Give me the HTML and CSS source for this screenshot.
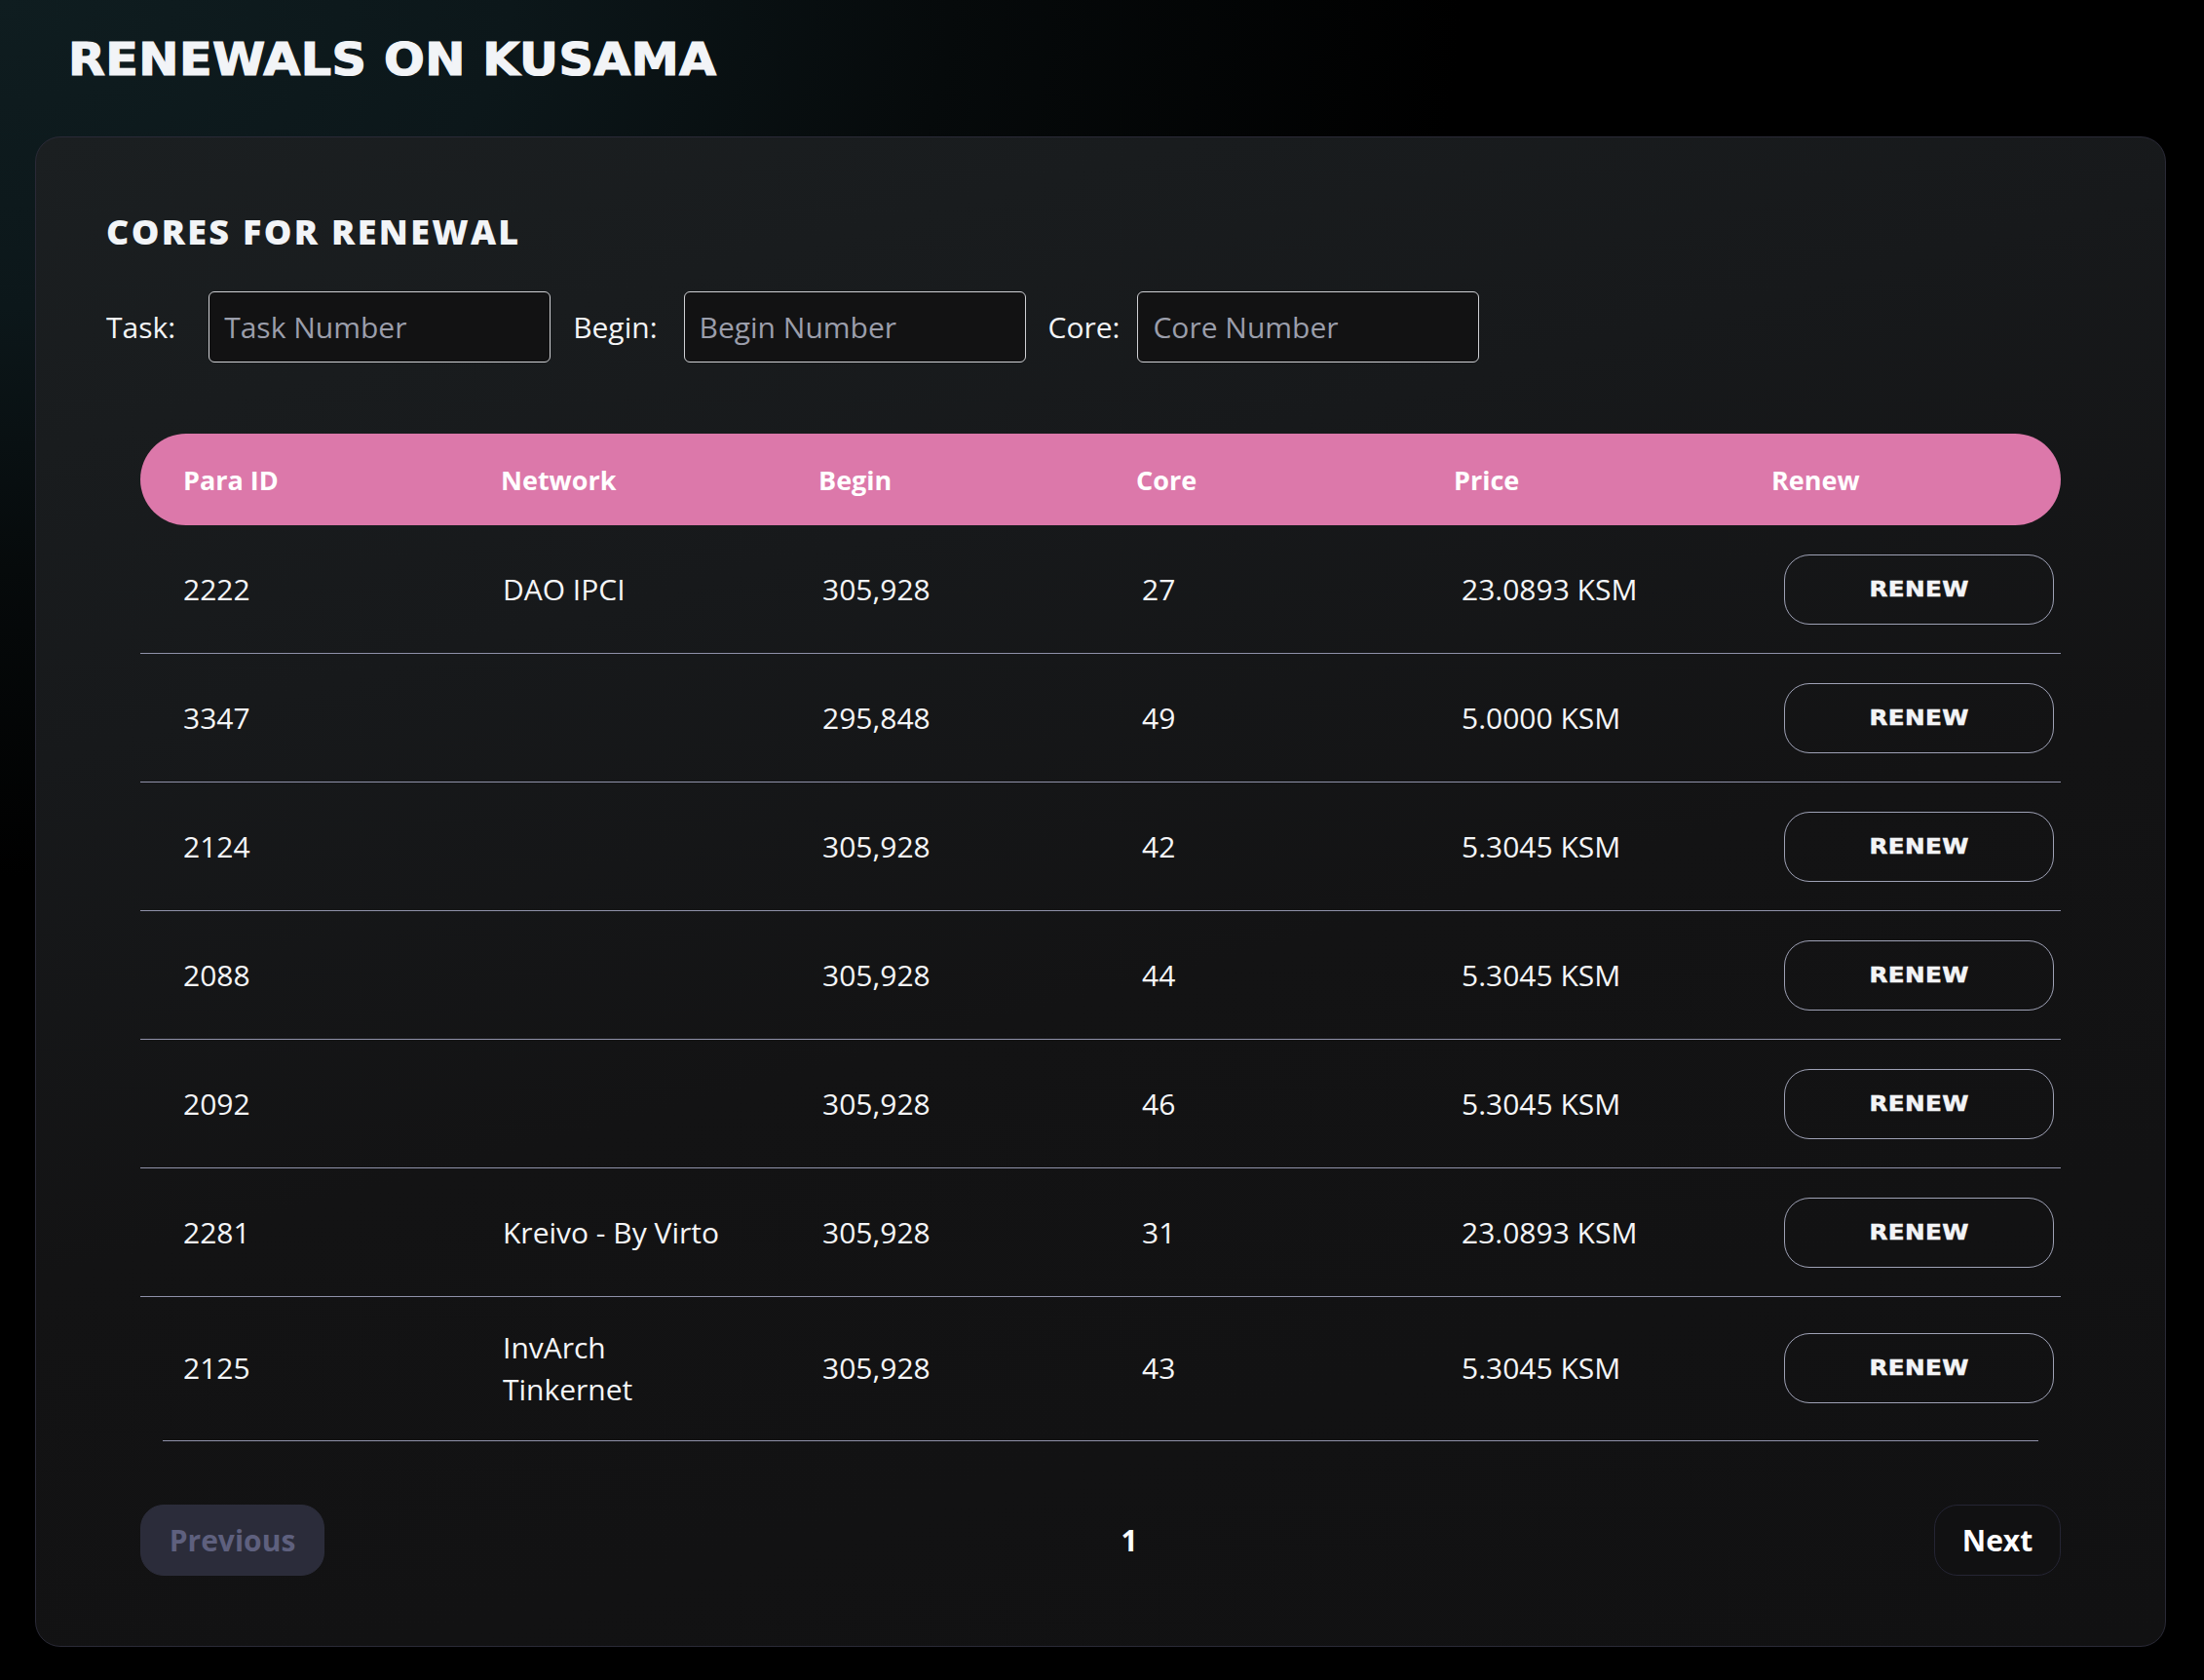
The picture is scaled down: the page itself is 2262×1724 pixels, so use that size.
FILE: index.html
```html
<!DOCTYPE html>
<html lang="en">
<head>
<meta charset="utf-8">
<title>Renewals on Kusama</title>
<link rel="stylesheet" href="styles.css">
</head>
<body>
<main class="page">
  <h1 class="page-title"><span class="wide-text">RENEWALS ON KUSAMA</span></h1>
  <section class="card">
    <div class="card-head">
      <h2 class="section-title">CORES FOR RENEWAL</h2>
      <div class="filters">
        <label class="filter-label filter-label-task" for="task">Task:</label>
        <input id="task" class="filter-input" type="text" placeholder="Task Number">
        <label class="filter-label filter-label-begin" for="begin">Begin:</label>
        <input id="begin" class="filter-input" type="text" placeholder="Begin Number">
        <label class="filter-label filter-label-core" for="core">Core:</label>
        <input id="core" class="filter-input" type="text" placeholder="Core Number">
      </div>
    </div>

    <div class="table">
      <div class="thead">
        <div class="th">Para ID</div>
        <div class="th">Network</div>
        <div class="th">Begin</div>
        <div class="th">Core</div>
        <div class="th">Price</div>
        <div class="th">Renew</div>
      </div>

      <div class="row">
        <div class="td">2222</div>
        <div class="td">DAO IPCI</div>
        <div class="td">305,928</div>
        <div class="td">27</div>
        <div class="td">23.0893 KSM</div>
        <div class="td td-action"><button class="renew-btn"><span class="wide-text">RENEW</span></button></div>
      </div>
      <div class="row">
        <div class="td">3347</div>
        <div class="td"></div>
        <div class="td">295,848</div>
        <div class="td">49</div>
        <div class="td">5.0000 KSM</div>
        <div class="td td-action"><button class="renew-btn"><span class="wide-text">RENEW</span></button></div>
      </div>
      <div class="row">
        <div class="td">2124</div>
        <div class="td"></div>
        <div class="td">305,928</div>
        <div class="td">42</div>
        <div class="td">5.3045 KSM</div>
        <div class="td td-action"><button class="renew-btn"><span class="wide-text">RENEW</span></button></div>
      </div>
      <div class="row">
        <div class="td">2088</div>
        <div class="td"></div>
        <div class="td">305,928</div>
        <div class="td">44</div>
        <div class="td">5.3045 KSM</div>
        <div class="td td-action"><button class="renew-btn"><span class="wide-text">RENEW</span></button></div>
      </div>
      <div class="row">
        <div class="td">2092</div>
        <div class="td"></div>
        <div class="td">305,928</div>
        <div class="td">46</div>
        <div class="td">5.3045 KSM</div>
        <div class="td td-action"><button class="renew-btn"><span class="wide-text">RENEW</span></button></div>
      </div>
      <div class="row">
        <div class="td">2281</div>
        <div class="td">Kreivo - By Virto</div>
        <div class="td">305,928</div>
        <div class="td">31</div>
        <div class="td">23.0893 KSM</div>
        <div class="td td-action"><button class="renew-btn"><span class="wide-text">RENEW</span></button></div>
      </div>
      <div class="row row-last">
        <div class="td">2125</div>
        <div class="td td-wrap">InvArch<br>Tinkernet</div>
        <div class="td">305,928</div>
        <div class="td">43</div>
        <div class="td">5.3045 KSM</div>
        <div class="td td-action"><button class="renew-btn"><span class="wide-text">RENEW</span></button></div>
      </div>
      <div class="table-end"></div>
    </div>

    <nav class="pager">
      <button class="pager-btn pager-prev" disabled>Previous</button>
      <span class="pager-num">1</span>
      <button class="pager-btn pager-next">Next</button>
    </nav>
  </section>
</main>
</body>
</html>
```

FILE: styles.css
```css
* { box-sizing: border-box; }

html, body {
  margin: 0;
  padding: 0;
}

body {
  min-height: 1724px;
  background:
    radial-gradient(ellipse 1500px 900px at 0% 0%, #0f1d20 0%, #0c171a 35%, #060a0b 65%, #000 100%),
    #000;
  font-family: "Open Sans", "Liberation Sans", sans-serif;
  color: #f4f5f7;
}

.page {
  padding: 38px 39px 0 36px;
}

.wide-text {
  display: inline-block;
  transform-origin: left center;
}

.page-title {
  margin: 0 0 0 34px;
  font-family: "DejaVu Sans", sans-serif;
  font-weight: 700;
  font-size: 46px;
  line-height: 46px;
  letter-spacing: 0.4px;
  color: #f2f4f7;
  -webkit-text-stroke: 1.2px #f2f4f7;
}

.page-title .wide-text {
  transform: scaleX(1.069);
}

.card {
  margin-top: 56px;
  height: 1550px;
  border: 1px solid #2a2a37;
  border-radius: 26px;
  background: linear-gradient(165deg, #1b1f21 0%, #17191b 30%, #131314 55%, #111112 100%);
  padding: 75px 0 72px;
}

.card-head {
  padding: 0 72px;
}

.section-title {
  margin: 0;
  font-weight: 800;
  font-size: 36px;
  line-height: 43px;
  letter-spacing: 2.3px;
  color: #f2f4f7;
}

.filters {
  margin-top: 40px;
  display: flex;
  align-items: center;
}

.filter-label {
  font-size: 30px;
  color: #f4f5f7;
  margin-right: 22px;
}

.filter-label-task { margin-right: 34px; }
.filter-label-begin { margin-right: 27px; }
.filter-label-core { margin-right: 18px; }

.filter-input {
  width: 351px;
  height: 73px;
  margin-right: 23px;
  padding: 0 15px;
  border: 1px solid #cfd0d4;
  border-radius: 6px;
  background: #121213;
  color: #f4f5f7;
  font-family: "Open Sans", "Liberation Sans", sans-serif;
  font-size: 30px;
  outline: none;
}

.filter-input::placeholder {
  color: #9b9eab;
}

.table {
  margin: 73px 107px 0;
}

.thead {
  height: 94px;
  border-radius: 47px;
  background: #dc78aa;
  display: grid;
  grid-template-columns: repeat(6, 326px);
  align-items: center;
}

.th {
  padding-left: 44px;
  font-weight: 700;
  font-size: 27px;
  color: #ffffff;
}

.row {
  display: grid;
  grid-template-columns: repeat(5, 328px) 1fr;
  align-items: center;
  padding: 29.5px 0;
  border-bottom: 1px solid #8f91a9;
}

.row-last {
  border-bottom: none;
  padding-bottom: 31.5px;
}

.td {
  padding-left: 44px;
  font-size: 30px;
  line-height: 43px;
  color: #f5f6f8;
}

.td-action {
  padding-left: 47px;
}

.renew-btn {
  display: flex;
  align-items: center;
  justify-content: center;
  width: 277px;
  height: 72px;
  border: 1px solid #9ea1b5;
  border-radius: 26px;
  background: transparent;
  color: #f3f4f6;
  font-family: "DejaVu Sans", sans-serif;
  font-weight: 700;
  font-size: 22px;
  letter-spacing: 0.3px;
  -webkit-text-stroke: 0.5px #f3f4f6;
  cursor: pointer;
}

.renew-btn .wide-text {
  transform-origin: center center;
  transform: scaleX(1.12);
}

.table-end {
  margin: 0 23px;
  height: 1px;
  background: #8f91a9;
}

.pager {
  margin: 64.5px 107px 0;
  display: flex;
  align-items: center;
  justify-content: space-between;
}

.pager-btn {
  height: 73px;
  border-radius: 24px;
  font-family: "Open Sans", "Liberation Sans", sans-serif;
  font-weight: 700;
  font-size: 30px;
  cursor: pointer;
}

.pager-prev {
  width: 189px;
  border: 1px solid #2c2d3b;
  background: #2b2c3a;
  color: #5e607e;
}

.pager-next {
  width: 130px;
  border: 1px solid #252534;
  background: #111112;
  color: #ffffff;
}

.pager-num {
  font-weight: 700;
  font-size: 30px;
  color: #ffffff;
}
```
